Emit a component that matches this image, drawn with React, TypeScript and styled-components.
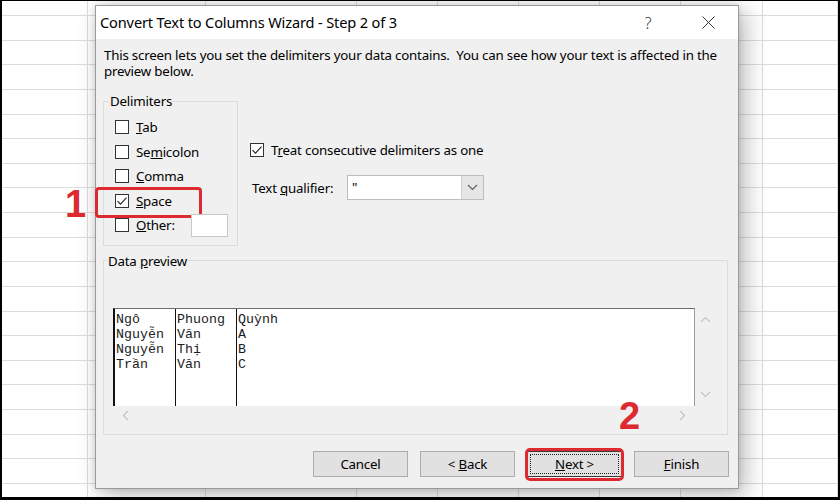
import React from 'react';
import styled, { createGlobalStyle } from 'styled-components';

const UI = `"Noto Sans", "Open Sans", sans-serif`;
const MONO = `"Liberation Mono", "Courier New", monospace`;
const RED = '#dc2a30';

const Global = createGlobalStyle`
  html, body { margin: 0; padding: 0; background: #fff; }
  body { width: 840px; height: 500px; overflow: hidden; font-family: ${UI}; }
`;

const Frame = styled.div`
  position: relative;
  width: 840px;
  height: 500px;
  box-sizing: border-box;
  border-style: solid;
  border-color: #000;
  border-width: 1px 2px 3px 2px;
  overflow: hidden;
  background: #fff;
`;

const Sheet = styled.div`
  display: grid;
  grid-template-columns: 86px 118px 151px 81px 81px 81px 81px 82px 1fr;
  grid-template-rows: 15px repeat(20, 24.63px);
`;

const Cell = styled.div`
  border-right: 1px solid #dcdcdc;
  border-bottom: 1px solid #dcdcdc;
  box-sizing: border-box;
`;

const Dialog = styled.div`
  position: absolute;
  left: 93px;
  top: 4px;
  width: 644px;
  height: 484px;
  box-sizing: border-box;
  border: 1px solid #9a9a9a;
  background: #f0f0f0;
  display: flex;
  flex-direction: column;
  box-shadow: 6px 6px 22px rgba(0, 0, 0, 0.28), 0 0 6px rgba(0, 0, 0, 0.12);
  font-family: ${UI};
  color: #000;
`;

const TitleBar = styled.div`
  height: 33px;
  flex: none;
  background: #fff;
  display: flex;
  align-items: center;
  padding: 0 0 0 4px;
  font-size: 14.6px;
  letter-spacing: -0.15px;
`;

const TitleText = styled.div`
  flex: 1;
  padding-bottom: 1px;
`;

const TitleButton = styled.div`
  width: 60px;
  height: 33px;
  display: flex;
  align-items: center;
  justify-content: center;
  color: #333;
  font-size: 16px;
  font-weight: 300;
`;

const Body = styled.div`
  flex: 1;
  padding: 8px 8px 0 7px;
  display: flex;
  flex-direction: column;
  font-size: 13.3px;
  letter-spacing: -0.2px;
`;

const Intro = styled.p`
  margin: 0 0 0 1px;
  line-height: 16px;
  height: 32px;
`;

const OptionsRow = styled.div`
  display: flex;
  margin-top: 14px;
`;

const Group = styled.fieldset<{ $w?: string }>`
  margin: 0;
  padding: 0;
  border: 1px solid #dcdcdc;
  box-sizing: border-box;
  ${(p) => (p.$w ? `width: ${p.$w};` : '')}
  min-width: 0;
`;

const Legend = styled.legend<{ $ml: number }>`
  margin-left: ${(p) => p.$ml}px;
  padding: 0 1px;
  line-height: 16px;
  font-size: 13.3px;
`;

const DelimList = styled.div`
  display: flex;
  flex-direction: column;
  padding: 6px 0 7px 11px;
`;

const CheckRow = styled.div<{ $h?: number }>`
  position: relative;
  display: flex;
  align-items: center;
  height: ${(p) => p.$h ?? 24.5}px;
  gap: 7px;
`;

const Highlighted = styled(CheckRow)`
  &::after {
    content: '';
    position: absolute;
    left: -20px;
    top: -2px;
    width: 101px;
    height: 25px;
    border: 3px solid ${RED};
    border-radius: 4px;
  }
`;

const Box = styled.span`
  width: 14px;
  height: 14px;
  box-sizing: border-box;
  border: 1px solid #333;
  background: #fff;
  display: flex;
  align-items: center;
  justify-content: center;
  flex: none;
`;

const OtherInput = styled.span`
  width: 37px;
  height: 23px;
  box-sizing: border-box;
  background: #fff;
  border: 1px solid #c8c8c8;
  margin-left: 9px;
`;

const RightCol = styled.div`
  display: flex;
  flex-direction: column;
  padding: 45px 0 0 12px;
  gap: 13px;
`;

const QualRow = styled.div`
  display: flex;
  align-items: center;
  height: 25px;
  padding-left: 2px;
`;

const QualLabel = styled.span`
  width: 95px;
`;

const Select = styled.div`
  width: 137px;
  height: 25px;
  box-sizing: border-box;
  border: 1px solid #bdbdbd;
  background: #fff;
  display: flex;
  align-items: stretch;
`;

const SelectValue = styled.span`
  flex: 1;
  padding-left: 4px;
  line-height: 22px;
`;

const SelectButton = styled.span`
  width: 21px;
  background: #e6e6e6;
  border-left: 1px solid #cfcfcf;
  display: flex;
  align-items: center;
  justify-content: center;
`;

const PreviewGroup = styled(Group)`
  margin-top: 7px;
  width: 625px;
`;

const PreviewArea = styled.div`
  display: grid;
  grid-template-columns: 582px 20px;
  grid-template-rows: 98px 20px;
  margin: 39px 0 8px 9px;
`;

const PreviewBox = styled.div`
  background: #fff;
  border-left: 2px solid #111;
  border-top: 1px solid #6d6d6d;
  border-right: 1px solid #9a9a9a;
  display: flex;
  font-family: ${MONO};
  font-size: 13.3px;
  letter-spacing: 0;
  line-height: 15px;
  color: #1c1c1c;
  overflow: hidden;
`;

const PreviewCol = styled.div<{ $last?: boolean }>`
  width: ${(p) => (p.$last ? 'auto' : '59px')};
  flex: ${(p) => (p.$last ? '1' : 'none')};
  border-right: ${(p) => (p.$last ? 'none' : '1px solid #111')};
  padding: 3px 0 0 1px;
  white-space: pre;
`;

const VScroll = styled.div`
  display: flex;
  flex-direction: column;
  justify-content: space-between;
  align-items: center;
  padding: 7px 0 6px 0;
`;

const HScroll = styled.div`
  display: flex;
  justify-content: space-between;
  align-items: center;
  padding: 0 7px 0 8px;
`;

const ButtonRow = styled.div`
  display: flex;
  justify-content: flex-end;
  gap: 12px;
  margin-top: 16px;
  padding-right: 1px;
`;

const Button = styled.div<{ $def?: boolean }>`
  position: relative;
  width: 95px;
  height: 26px;
  box-sizing: border-box;
  background: #e1e1e1;
  border: 1px solid ${(p) => (p.$def ? '#3a3a3a' : '#adadad')};
  display: flex;
  align-items: center;
  justify-content: center;
  font-size: 13.3px;
  white-space: pre;
  ${(p) =>
    p.$def
      ? `
    &::before {
      content: '';
      position: absolute;
      inset: 2px;
      border: 1px dotted #222;
    }
    &::after {
      content: '';
      position: absolute;
      left: -3px;
      top: -4px;
      right: -3px;
      bottom: -5px;
      border: 3px solid ${RED};
      border-radius: 5px;
    }
  `
      : ''}
`;

const Marker = styled.div<{ $x: number; $y: number }>`
  position: absolute;
  left: ${(p) => p.$x}px;
  top: ${(p) => p.$y}px;
  font-family: "Liberation Sans", Arial, sans-serif;
  font-weight: 700;
  font-size: 38px;
  line-height: 38px;
  color: ${RED};
`;

const Check = () => (
  <svg width="12" height="12" viewBox="0 0 12 12">
    <path d="M1.5 6.2 L4.5 9.2 L10.5 2.6" fill="none" stroke="#222" strokeWidth="1.1" />
  </svg>
);

const Chevron = ({ dir, color = '#b9b9b9' }: { dir: 'up' | 'down' | 'left' | 'right'; color?: string }) => {
  const d = {
    up: 'M1 7 L5.5 2.5 L10 7',
    down: 'M1 3 L5.5 7.5 L10 3',
    left: 'M7 1 L2.5 5.5 L7 10',
    right: 'M3 1 L7.5 5.5 L3 10',
  }[dir];
  return (
    <svg width="11" height="11" viewBox="0 0 11 11">
      <path d={d} fill="none" stroke={color} strokeWidth="1.2" />
    </svg>
  );
};

const u = (s: string) => <u>{s}</u>;

const rows = [
  ['Ngô', 'Phuong', 'Quỳnh'],
  ['Nguyễn', 'Văn', 'A'],
  ['Nguyễn', 'Thị', 'B'],
  ['Trần', 'Văn', 'C'],
];

export default function App() {
  return (
    <Frame>
      <Global />
      <Sheet>
        {Array.from({ length: 9 * 21 }).map((_, i) => (
          <Cell key={i} />
        ))}
      </Sheet>

      <Dialog>
        <TitleBar>
          <TitleText>Convert Text to Columns Wizard - Step 2 of 3</TitleText>
          <TitleButton>?</TitleButton>
          <TitleButton>
            <svg width="13" height="13" viewBox="0 0 13 13">
              <path d="M0.5 0.5 L12.5 12.5 M12.5 0.5 L0.5 12.5" stroke="#333" strokeWidth="1" />
            </svg>
          </TitleButton>
        </TitleBar>
        <Body>
          <Intro>
            This screen lets you set the delimiters your data contains.&nbsp; You can see how your text is affected in the preview below.
          </Intro>
          <OptionsRow>
            <Group $w="135px">
              <Legend $ml={5}>Delimiters</Legend>
              <DelimList>
                <CheckRow>
                  <Box />
                  <span>{u('T')}ab</span>
                </CheckRow>
                <CheckRow>
                  <Box />
                  <span>Se{u('m')}icolon</span>
                </CheckRow>
                <CheckRow>
                  <Box />
                  <span>{u('C')}omma</span>
                </CheckRow>
                <Highlighted>
                  <Box>
                    <Check />
                  </Box>
                  <span>{u('S')}pace</span>
                </Highlighted>
                <CheckRow>
                  <Box />
                  <span>{u('O')}ther:</span>
                  <OtherInput />
                </CheckRow>
              </DelimList>
            </Group>
            <RightCol>
              <CheckRow $h={24}>
                <Box>
                  <Check />
                </Box>
                <span>T{u('r')}eat consecutive delimiters as one</span>
              </CheckRow>
              <QualRow>
                <QualLabel>Text {u('q')}ualifier:</QualLabel>
                <Select>
                  <SelectValue>"</SelectValue>
                  <SelectButton>
                    <Chevron dir="down" color="#606060" />
                  </SelectButton>
                </Select>
              </QualRow>
            </RightCol>
          </OptionsRow>

          <PreviewGroup>
            <Legend $ml={3}>Data {u('p')}review</Legend>
            <PreviewArea>
              <PreviewBox>
                {[0, 1, 2].map((c) => (
                  <PreviewCol key={c} $last={c === 2}>
                    {rows.map((r) => r[c]).join('\n')}
                  </PreviewCol>
                ))}
              </PreviewBox>
              <VScroll>
                <Chevron dir="up" color="#c4c4c4" />
                <Chevron dir="down" color="#c4c4c4" />
              </VScroll>
              <HScroll>
                <Chevron dir="left" color="#c4c4c4" />
                <Chevron dir="right" color="#c4c4c4" />
              </HScroll>
              <div />
            </PreviewArea>
          </PreviewGroup>

          <ButtonRow>
            <Button>
              <span>Cancel</span>
            </Button>
            <Button>
              <span>&lt; {u('B')}ack</span>
            </Button>
            <Button $def>
              <span>{u('N')}ext &gt;</span>
            </Button>
            <Button>
              <span>{u('F')}inish</span>
            </Button>
          </ButtonRow>
        </Body>
      </Dialog>

      <Marker $x={63} $y={184}>1</Marker>
      <Marker $x={617} $y={396}>2</Marker>
    </Frame>
  );
}
